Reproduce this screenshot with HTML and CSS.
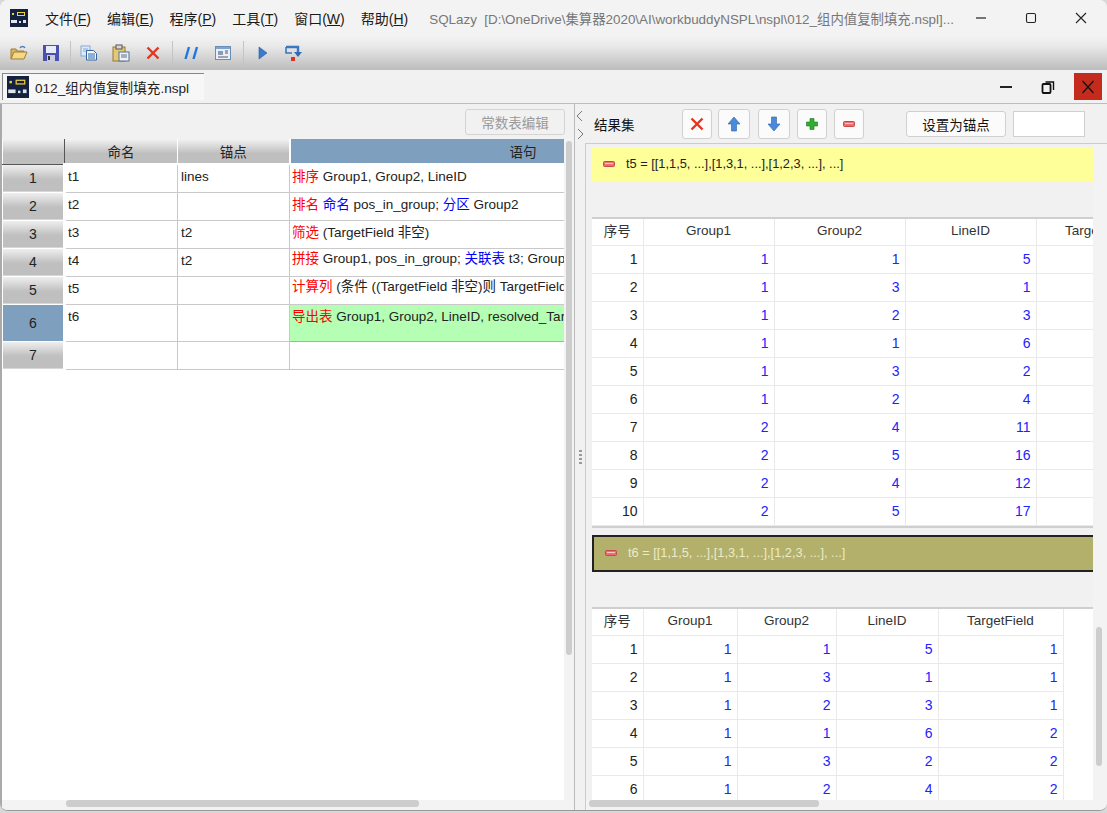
FILE: index.html
```html
<!DOCTYPE html>
<html lang="zh">
<head>
  <meta charset="UTF-8" />
  <title>SQLazy</title>
  <link rel="stylesheet" href="styles.css">
</head>
<body>
  <div class="window">

    <div class="titlebar">
      <svg class="app-icon" width="18" height="18" viewBox="0 0 18 18">
        <rect width="18" height="18" fill="#14213f"/>
        <rect x="2" y="4" width="2" height="2" fill="#f0d040"/>
        <rect x="7" y="3" width="8" height="4" fill="#f0d040"/>
        <rect x="8" y="4" width="6" height="2" fill="#14213f"/>
        <rect x="1" y="11" width="6" height="3" fill="#dfe6f0"/>
        <rect x="9" y="12" width="2" height="2" fill="#dfe6f0"/>
        <rect x="13" y="11" width="3" height="3" fill="#dfe6f0"/>
      </svg>
      <div class="menu">
        <span class="menu-item">文件(<u>F</u>)</span>
        <span class="menu-item">编辑(<u>E</u>)</span>
        <span class="menu-item">程序(<u>P</u>)</span>
        <span class="menu-item">工具(<u>T</u>)</span>
        <span class="menu-item">窗口(<u>W</u>)</span>
        <span class="menu-item">帮助(<u>H</u>)</span>
      </div>
      <div class="app-title">SQLazy&nbsp; [D:\OneDrive\集算器2020\AI\workbuddyNSPL\nspl\012_组内值复制填充.nspl]...</div>
      <div class="win-controls">
        <svg width="12" height="12" viewBox="0 0 12 12"><path d="M1 6h10" stroke="#222" stroke-width="1.2"/></svg>
        <svg width="12" height="12" viewBox="0 0 12 12"><rect x="1.5" y="1.5" width="9" height="9" rx="1.5" fill="none" stroke="#222" stroke-width="1.1"/></svg>
        <svg width="12" height="12" viewBox="0 0 12 12"><path d="M1 1l10 10M11 1L1 11" stroke="#222" stroke-width="1.1"/></svg>
      </div>
    </div>

    <div class="toolbar">
      <svg class="tool t-open" width="18" height="18" viewBox="0 0 18 18"><path d="M1 15V5h5l1 2h7v2" fill="#d9b45a" stroke="#a07f30"/><path d="M1 15l3-7h13l-3 7z" fill="#f4d88a" stroke="#a07f30"/><path d="M10 4c1-2 4-2 5 0" fill="none" stroke="#4a80c0" stroke-width="1.4"/></svg>
      <svg class="tool t-save" width="18" height="18" viewBox="0 0 18 18"><rect x="1" y="1" width="16" height="16" fill="#4a50b0"/><rect x="4" y="2" width="10" height="7" fill="#e8ecf8"/><rect x="5" y="11" width="8" height="6" fill="#c8cce0"/><rect x="6" y="12" width="2" height="4" fill="#333"/></svg>
      <span class="tool-sep s-one"></span>
      <svg class="tool t-copy" width="18" height="18" viewBox="0 0 18 18"><rect x="1" y="2" width="9" height="10" fill="#dfeaf7" stroke="#8aa8cc"/><path d="M3 5h5M3 7h5" stroke="#8aa8cc"/><path d="M6.5 6.5h7l3 3v6.5h-10z" fill="#f2f6fc" stroke="#2f66a8"/><path d="M8 10h7M8 12h7M8 14h7" stroke="#2f66a8"/></svg>
      <svg class="tool t-paste" width="18" height="18" viewBox="0 0 18 18"><rect x="1" y="3" width="12" height="14" fill="#e4c878" stroke="#96782c"/><rect x="4" y="1" width="6" height="4" fill="#d8d8d8" stroke="#555"/><rect x="7" y="8" width="10" height="9" fill="#eef2f8" stroke="#55708f"/><path d="M9 11h6M9 13h6" stroke="#55708f"/></svg>
      <svg class="tool t-del" width="14" height="14" viewBox="0 0 14 14"><path d="M1.5 1.5l11 11M12.5 1.5l-11 11" stroke="#e8331f" stroke-width="2.4"/></svg>
      <span class="tool-sep s-two"></span>
      <svg class="tool t-slash" width="16" height="16" viewBox="0 0 16 16"><path d="M5 2L1.5 14M13 2L9.5 14" stroke="#1c78e6" stroke-width="2.4"/></svg>
      <svg class="tool t-win" width="16" height="16" viewBox="0 0 16 16"><rect x="0.5" y="1.5" width="15" height="13" fill="#eaf0f8" stroke="#6a8cb8"/><rect x="1" y="2" width="14" height="2" fill="#7ea4d4"/><rect x="3" y="6" width="5" height="4" fill="#8a9cb4"/><path d="M10 6h3M10 8h3M3 12h10" stroke="#556"/></svg>
      <span class="tool-sep s-three"></span>
      <svg class="tool t-play" width="10" height="14" viewBox="0 0 10 14"><path d="M1 1l8 6-8 6z" fill="#3a7ad0" stroke="#2a5aa0" stroke-width="0.6"/></svg>
      <svg class="tool t-step" width="18" height="16" viewBox="0 0 18 16"><path d="M1 2h12v5" fill="none" stroke="#3a78c0" stroke-width="2.4"/><path d="M9 7h8l-4 5z" fill="#2f6cb4"/><path d="M1 2v6h6" fill="none" stroke="#3a78c0" stroke-width="1.6"/><rect x="6" y="12" width="4" height="4" fill="#e03020"/></svg>
    </div>

    <div class="tabbar">
      <div class="tab">
        <svg width="22" height="22" viewBox="0 0 18 18">
          <rect width="18" height="18" fill="#14213f"/>
          <rect x="2" y="4" width="2" height="2" fill="#f0d040"/>
          <rect x="7" y="3" width="8" height="4" fill="#f0d040"/>
          <rect x="8" y="4" width="6" height="2" fill="#14213f"/>
          <rect x="1" y="11" width="6" height="3" fill="#dfe6f0"/>
          <rect x="9" y="12" width="2" height="2" fill="#dfe6f0"/>
          <rect x="13" y="11" width="3" height="3" fill="#dfe6f0"/>
        </svg>
        <span>012_组内值复制填充.nspl</span>
      </div>
      <div class="doc-controls">
        <svg width="14" height="14" viewBox="0 0 14 14"><path d="M1 7h12" stroke="#222" stroke-width="2"/></svg>
        <svg class="doc-restore" width="14" height="14" viewBox="0 0 14 14"><rect x="1.5" y="4" width="8" height="9" rx="1" fill="none" stroke="#111" stroke-width="1.8"/><path d="M4.5 2h8v8" fill="none" stroke="#111" stroke-width="1.4"/></svg>
        <div class="doc-close"><svg width="14" height="14" viewBox="0 0 14 14"><path d="M1.5 1l11 12M12.5 1l-11 12" stroke="#111" stroke-width="1.3"/></svg></div>
      </div>
    </div>

    <div class="workspace">

      <div class="left">
        <div class="left-top"><button class="const-btn">常数表编辑</button></div>
        <div class="left-mid">
          <div class="grid-wrap">
            <table class="grid">
              <colgroup><col class="c-head"><col class="c-name"><col class="c-anchor"><col class="c-stmt"></colgroup>
              <tr class="grid-head"><th class="corner"></th><th>命名</th><th>锚点</th><th class="sel-col">语句</th></tr>
              <tr><th class="row-no">1</th><td>t1</td><td>lines</td><td class="stmt"><b>排序</b> Group1, Group2, LineID</td></tr>
              <tr><th class="row-no">2</th><td>t2</td><td></td><td class="stmt"><b>排名</b> <i>命名</i> pos_in_group; <i>分区</i> Group2</td></tr>
              <tr><th class="row-no">3</th><td>t3</td><td>t2</td><td class="stmt"><b>筛选</b> (TargetField 非空)</td></tr>
              <tr><th class="row-no">4</th><td>t4</td><td>t2</td><td class="stmt raised"><b>拼接</b> Group1, pos_in_group; <i>关联表</i> t3; Group1, pos_in_group</td></tr>
              <tr><th class="row-no">5</th><td>t5</td><td></td><td class="stmt raised"><b>计算列</b> (条件 ((TargetField 非空)则 TargetField</td></tr>
              <tr class="tall"><th class="row-no sel-row">6</th><td>t6</td><td></td><td class="stmt sel-cell"><b>导出表</b> Group1, Group2, LineID, resolved_TargetField</td></tr>
              <tr><th class="row-no">7</th><td></td><td></td><td class="stmt"></td></tr>
            </table>
          </div>
          <div class="vbar vbar-left"><div class="vthumb"></div></div>
        </div>
        <div class="hbar hbar-left"><div class="hthumb"></div></div>
      </div>

      <div class="splitter">
        <svg width="8" height="30" viewBox="0 0 8 30"><path d="M6 1L1 6l5 5M2 19l5 5-5 5" fill="none" stroke="#777" stroke-width="1"/></svg>
        <div class="grip"><span></span><span></span><span></span><span></span></div>
      </div>

      <div class="right">
        <div class="right-top">
          <span class="right-label">结果集</span>
          <button class="icon-btn btn-del"><svg width="14" height="14" viewBox="0 0 14 14"><path d="M1.5 1.5l11 11M12.5 1.5l-11 11" stroke="#e8331f" stroke-width="2.4"/></svg></button>
          <button class="icon-btn btn-up"><svg width="14" height="16" viewBox="0 0 14 16"><path d="M7 1l6 7H9.5v7h-5V8H1z" fill="#4a8ad8" stroke="#2a62a8" stroke-width="0.6"/></svg></button>
          <button class="icon-btn btn-down"><svg width="14" height="16" viewBox="0 0 14 16"><path d="M7 15l6-7H9.5V1h-5v7H1z" fill="#4a8ad8" stroke="#2a62a8" stroke-width="0.6"/></svg></button>
          <button class="icon-btn"><svg width="12" height="12" viewBox="0 0 12 12"><path d="M4 0.5h4v3.5h3.5v4H8v3.5H4V8H0.5V4H4z" fill="#2fae2f" stroke="#1c7a1c" stroke-width="0.6"/></svg></button>
          <button class="icon-btn"><svg width="12" height="6" viewBox="0 0 12 6"><rect x="0.5" y="0.5" width="11" height="5" rx="1" fill="#e87070" stroke="#c84848"/><path d="M2 2.5h8" stroke="#f8c8c8"/></svg></button>
          <button class="anchor-btn">设置为锚点</button>
          <input class="anchor-input" type="text">
        </div>
        <div class="right-body">
          <div class="right-mid">
            <div class="results">
              <div class="result-bar bar-yellow">
                <svg width="12" height="6" viewBox="0 0 12 6"><rect x="0.5" y="0.5" width="11" height="5" rx="1" fill="#e87070" stroke="#c84848"/><path d="M2 2.5h8" stroke="#f8c8c8"/></svg>
                <span>t5 = [[1,1,5, ...],[1,3,1, ...],[1,2,3, ...], ...]</span>
              </div>
              <div class="table-box box-first">
                <table class="data data-one">
                  <colgroup><col class="d-no"><col class="d-a"><col class="d-a"><col class="d-a"><col class="d-t"></colgroup>
                  <tr><th>序号</th><th>Group1</th><th>Group2</th><th>LineID</th><th>TargetField</th></tr>
                  <tr><td class="no">1</td><td>1</td><td>1</td><td>5</td><td></td></tr>
                  <tr><td class="no">2</td><td>1</td><td>3</td><td>1</td><td></td></tr>
                  <tr><td class="no">3</td><td>1</td><td>2</td><td>3</td><td></td></tr>
                  <tr><td class="no">4</td><td>1</td><td>1</td><td>6</td><td></td></tr>
                  <tr><td class="no">5</td><td>1</td><td>3</td><td>2</td><td></td></tr>
                  <tr><td class="no">6</td><td>1</td><td>2</td><td>4</td><td></td></tr>
                  <tr><td class="no">7</td><td>2</td><td>4</td><td>11</td><td></td></tr>
                  <tr><td class="no">8</td><td>2</td><td>5</td><td>16</td><td></td></tr>
                  <tr><td class="no">9</td><td>2</td><td>4</td><td>12</td><td></td></tr>
                  <tr><td class="no">10</td><td>2</td><td>5</td><td>17</td><td></td></tr>
                </table>
              </div>
              <div class="result-bar bar-olive">
                <svg width="12" height="6" viewBox="0 0 12 6"><rect x="0.5" y="0.5" width="11" height="5" rx="1" fill="#e87070" stroke="#c84848"/><path d="M2 2.5h8" stroke="#f8c8c8"/></svg>
                <span>t6 = [[1,1,5, ...],[1,3,1, ...],[1,2,3, ...], ...]</span>
              </div>
              <div class="table-box box-second">
                <table class="data data-two">
                  <colgroup><col class="d-no"><col class="d-g1"><col class="d-g2"><col class="d-l"><col class="d-t"></colgroup>
                  <tr><th>序号</th><th>Group1</th><th>Group2</th><th>LineID</th><th>TargetField</th></tr>
                  <tr><td class="no">1</td><td>1</td><td>1</td><td>5</td><td>1</td></tr>
                  <tr><td class="no">2</td><td>1</td><td>3</td><td>1</td><td>1</td></tr>
                  <tr><td class="no">3</td><td>1</td><td>2</td><td>3</td><td>1</td></tr>
                  <tr><td class="no">4</td><td>1</td><td>1</td><td>6</td><td>2</td></tr>
                  <tr><td class="no">5</td><td>1</td><td>3</td><td>2</td><td>2</td></tr>
                  <tr><td class="no">6</td><td>1</td><td>2</td><td>4</td><td>2</td></tr>
                </table>
              </div>
            </div>
            <div class="vbar vbar-right"><div class="vthumb"></div></div>
          </div>
          <div class="hbar hbar-right"><div class="hthumb"></div></div>
        </div>
      </div>

    </div>
  </div>
</body>
</html>
```

FILE: styles.css
```css
* {
  box-sizing: border-box;
}
body {
  margin: 0;
  height: 813px;
  overflow: hidden;
  background: #d8d8d8;
  font-family: "Liberation Sans", "Noto Sans CJK SC", sans-serif;
  font-size: 13.5px;
  color: #222;
}
button {
  font-family: inherit;
}
.window {
  width: 1107px;
  height: 811px;
  display: flex;
  flex-direction: column;
  background: #f1f1f1;
  border-radius: 8px;
  border-bottom: 1px solid #999;
  overflow: hidden;
}

/* title bar */
.titlebar {
  height: 36px;
  flex: none;
  display: flex;
  align-items: center;
  padding-left: 10px;
  background: #f3f3f3;
}
.menu {
  display: flex;
  gap: 16px;
  margin-left: 17px;
  font-size: 14px;
  color: #1a1a1a;
}
.app-title {
  margin-left: 21px;
  font-size: 13.4px;
  color: #777;
  white-space: nowrap;
}
.win-controls {
  display: flex;
  gap: 38px;
  margin-left: auto;
  margin-right: 20px;
}

/* toolbar */
.toolbar {
  height: 34px;
  flex: none;
  display: flex;
  align-items: center;
  padding-left: 10px;
  background: linear-gradient(to bottom, #f3f3f3 0%, #e9e9e9 30%, #bcbcbc 100%);
}
.t-open { margin-right: 14px; }
.t-save { margin-right: 10px; }
.t-copy { margin-right: 14px; }
.t-paste { margin-right: 16px; }
.t-del { margin-right: 12px; }
.t-slash { margin-right: 15px; }
.t-win { margin-right: 12px; }
.t-play { margin-right: 17px; }
.tool-sep {
  width: 1px;
  height: 24px;
  background: #c4c4c4;
}
.s-one { margin-right: 9px; }
.s-two { margin-right: 11px; }
.s-three { margin-right: 14px; }

/* tabs */
.tabbar {
  height: 34px;
  flex: none;
  display: flex;
  align-items: center;
  padding-left: 2px;
  background: #f1f1f1;
  border-bottom: 1px solid #bdbdbd;
}
.tab {
  width: 202px;
  height: 27px;
  display: flex;
  align-items: center;
  gap: 6px;
  padding-left: 4px;
  background: #f7f7f7;
  border-top: 1px solid #888;
  border-left: 1px solid #888;
  font-size: 13.6px;
}
.doc-controls {
  display: flex;
  align-items: center;
  margin-left: auto;
  margin-right: 5px;
}
.doc-restore {
  margin-left: 28px;
  margin-right: 19px;
}
.doc-close {
  width: 28px;
  height: 27px;
  display: flex;
  align-items: center;
  justify-content: center;
  background: #c42b1c;
}

/* main split */
.workspace {
  flex: 1;
  min-height: 0;
  display: flex;
}
.left {
  width: 575px;
  flex: none;
  display: flex;
  flex-direction: column;
  border-left: 2px solid #aaa;
  border-right: 1px solid #bbb;
}
.left-top {
  height: 35px;
  flex: none;
  display: flex;
  justify-content: flex-end;
  align-items: center;
  padding-right: 9px;
}
.const-btn {
  width: 100px;
  height: 26px;
  padding: 0;
  font-size: 13.5px;
  color: #9a9a9a;
  background: #f1f1f1;
  border: 1px solid #d4d4d4;
  border-radius: 3px;
}
.left-mid {
  flex: 1;
  min-height: 0;
  display: flex;
}
.grid-wrap {
  width: 562px;
  flex: none;
  background: #fff;
  overflow: hidden;
}
.grid {
  width: 753px;
  table-layout: fixed;
  border-collapse: collapse;
  font-size: 13.5px;
}
.c-head { width: 62px; }
.c-name { width: 113px; }
.c-anchor { width: 112px; }
.c-stmt { width: 466px; }
.grid tr {
  height: 28px;
}
.grid tr.grid-head {
  height: 25px;
}
.grid tr.tall {
  height: 37px;
}
.grid-head th {
  height: 25px;
  padding: 0 0 1px;
  font-weight: normal;
  font-size: 13.5px;
  color: #222;
  background: linear-gradient(to bottom, #f2f2f2, #bfbfbf 60%);
  border-left: 1px solid #fff;
  border-bottom: 2px solid #fff;
}
.grid-head .corner {
  border-left: 0;
  border-right: 1px solid #555;
  border-bottom: 1px solid #555;
}
.grid-head .sel-col {
  background: #7f9fbf;
  border-left: 2px solid #fff;
}
.grid td {
  padding: 4px 3px 0 2px;
  vertical-align: top;
  white-space: nowrap;
  overflow: hidden;
  border: 1px solid #c9c9c9;
  border-top: 0;
  line-height: 16px;
}
.grid td + td {
  padding-left: 3px;
}
.grid td.stmt {
  padding-left: 2px;
}
.grid td.raised {
  padding-top: 2px;
}
.stmt b {
  font-weight: normal;
  color: #f00;
}
.stmt i {
  font-style: normal;
  color: #00f;
}
.grid td.sel-cell {
  background: #b4ffb4;
  border: 1px solid #80cc80;
  padding-top: 4px;
}
.row-no {
  padding: 0;
  font-weight: normal;
  font-size: 14px;
  color: #222;
  background: linear-gradient(to bottom, #f0f0f0, #bfbfbf 55%);
  border: 1px solid #fff;
  border-right: 3px solid #fff;
}
.row-no.sel-row {
  background: #7f9fbf;
}

/* scrollbars */
.vbar {
  flex: 1;
  background: #f3f3f3;
}
.vbar-left {
  padding: 2px 2px 0 2px;
}
.vbar-left .vthumb {
  height: 514px;
}
.vthumb {
  background: #cdcdcd;
  border-radius: 3px;
}
.hbar {
  height: 10px;
  flex: none;
  background: #f3f3f3;
}
.hthumb {
  height: 7px;
  background: #cdcdcd;
  border-radius: 3px;
}
.hbar-left {
  padding-left: 64px;
}
.hbar-left .hthumb {
  width: 353px;
}

/* splitter */
.splitter {
  width: 10px;
  flex: none;
  display: flex;
  flex-direction: column;
  align-items: center;
  padding-top: 6px;
  background: #f1f1f1;
}
.grip {
  display: flex;
  flex-direction: column;
  gap: 2px;
  margin-top: 310px;
}
.grip span {
  width: 3px;
  height: 2px;
  background: #999;
}

/* right side */
.right {
  flex: 1;
  min-width: 0;
  display: flex;
  flex-direction: column;
}
.right-top {
  height: 39px;
  flex: none;
  display: flex;
  align-items: center;
  gap: 7px;
  padding-left: 9px;
}
.right-label {
  width: 81px;
  font-size: 13.5px;
  color: #111;
}
.icon-btn {
  width: 30px;
  height: 30px;
  padding: 0;
  display: flex;
  align-items: center;
  justify-content: center;
  background: #fbfbfb;
  border: 1px solid #d0d0d0;
  border-radius: 3px;
}
.btn-del {
  margin-right: -1px;
}
.btn-up,
.btn-down {
  width: 32px;
}
.btn-up {
  margin-right: 1px;
}
.anchor-btn {
  width: 100px;
  height: 26px;
  padding: 0;
  margin-left: 35px;
  font-size: 13.5px;
  color: #111;
  background: #fbfbfb;
  border: 1px solid #d0d0d0;
  border-radius: 3px;
}
.anchor-input {
  width: 72px;
  height: 26px;
  background: #fff;
  border: 1px solid #d0d0d0;
}
.right-body {
  flex: 1;
  min-height: 0;
  display: flex;
  flex-direction: column;
  border-top: 1px solid #ccc;
  border-left: 1px solid #ccc;
}
.right-mid {
  flex: 1;
  min-height: 0;
  display: flex;
}
.results {
  width: 507px;
  flex: none;
  padding: 3px 0 0 5px;
  overflow: hidden;
}
.result-bar {
  display: flex;
  align-items: center;
  gap: 11px;
  padding: 0 0 2px 12px;
  height: 35px;
  font-size: 12.8px;
}
.bar-yellow {
  background: #ffff99;
  color: #222;
}
.bar-olive {
  height: 37px;
  margin-left: 1px;
  padding-left: 11px;
  background: #b3b06c;
  color: #ecebc8;
  border: 2px solid #222;
  border-right: 0;
}
.table-box {
  margin-left: 1px;
  background: #fff;
  overflow: hidden;
  border-top: 2px solid #cfcfcf;
}
.box-first {
  margin-top: 35px;
  height: 311px;
  border-bottom: 2px solid #cfcfcf;
  margin-bottom: 7px;
}
.box-second {
  margin-top: 35px;
  height: 194px;
}
.data {
  table-layout: fixed;
  border-collapse: collapse;
  font-size: 13.5px;
}
.data-one { width: 568px; }
.data-two { width: 471px; }
.d-no { width: 51px; }
.d-a { width: 131px; }
.d-t { width: 125px; }
.d-g1 { width: 94px; }
.d-g2 { width: 99px; }
.d-l { width: 102px; }
.data tr {
  height: 28px;
}
.data tr:first-child {
  height: 26px;
}
.data th {
  padding: 0 0 3px;
  font-weight: normal;
  color: #333;
  border: 1px solid #e9e9e9;
  border-top: 0;
  border-left: 0;
}
.data td {
  padding: 0 5px 0 0;
  font-size: 14px;
  text-align: right;
  color: #2222ff;
  border: 1px solid #e9e9e9;
  border-left: 0;
}
.data td.no {
  color: #222;
}
.vbar-right {
  padding-top: 483px;
  padding-left: 3px;
  padding-right: 5px;
}
.vbar-right .vthumb {
  height: 139px;
}
.hbar-right {
  padding-left: 3px;
}
.hbar-right .hthumb {
  width: 230px;
}
```
